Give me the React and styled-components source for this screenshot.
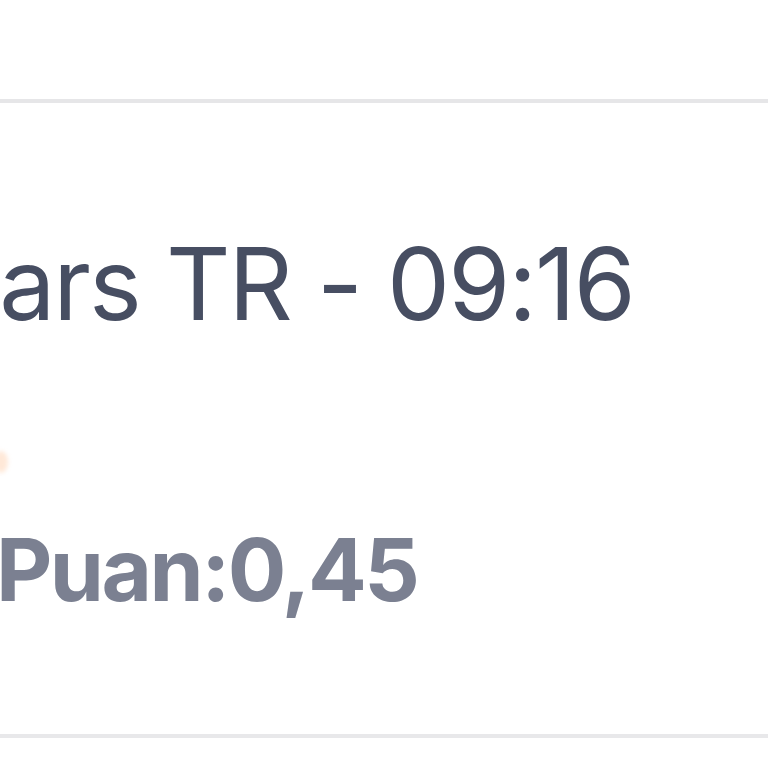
import React from "react";
import styled, { createGlobalStyle } from "styled-components";

const Global = createGlobalStyle`
  html, body { margin: 0; padding: 0; background: #ffffff; }
  body { font-family: Inter, "Noto Sans", sans-serif; }
`;

const Page = styled.div`
  width: 768px;
  height: 768px;
  overflow: hidden;
  background: #ffffff;
  padding-top: 99px;
  box-sizing: border-box;
`;

const Card = styled.section`
  height: 639px;
  box-sizing: border-box;
  border-top: 4px solid #e6e6e8;
  border-bottom: 4px solid #e8e8ea;
  display: flex;
  flex-direction: column;
  padding-top: 131px;
`;

const Title = styled.h2`
  margin: 0 0 0 -66px;
  font-family: Inter, sans-serif;
  font-weight: 400;
  font-size: 100px;
  line-height: 100px;
  letter-spacing: -2px;
  color: #474e62;
  white-space: nowrap;
`;

const Meta = styled.div`
  display: flex;
  align-items: center;
  height: 40px;
  margin-top: 108px;
`;

const Dot = styled.span`
  width: 14px;
  height: 22px;
  border-radius: 50%;
  margin-left: -6px;
  background: #ffd6b8;
  opacity: 0.55;
  filter: blur(2px);
`;

const Score = styled.div`
  margin: 43px 0 0 -4px;
  font-family: Inter, sans-serif;
  font-weight: 700;
  font-size: 87px;
  line-height: 90px;
  letter-spacing: -2.5px;
  color: #7b8091;
  white-space: nowrap;
`;

export default function App() {
  return (
    <>
      <Global />
      <Page>
        <Card>
          <Title>Kars TR - 09:16</Title>
          <Meta>
            <Dot />
          </Meta>
          <Score>Puan:0,45</Score>
        </Card>
      </Page>
    </>
  );
}
